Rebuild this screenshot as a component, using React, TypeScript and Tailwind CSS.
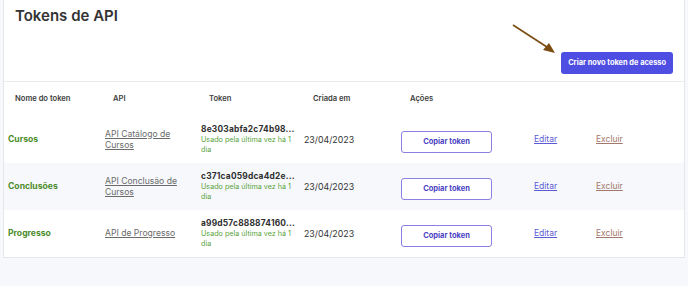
import React from 'react'

type TokenRow = {
  name: string
  api: string
  token: string
  created: string
}

const rows: TokenRow[] = [
  { name: 'Cursos', api: 'API Catálogo de Cursos', token: '8e303abfa2c74b98...', created: '23/04/2023' },
  { name: 'Conclusões', api: 'API Conclusão de Cursos', token: 'c371ca059dca4d2e...', created: '23/04/2023' },
  { name: 'Progresso', api: 'API de Progresso', token: 'a99d57c888874160...', created: '23/04/2023' },
]

function Arrow() {
  return (
    <svg className="pointer-events-none absolute left-[510px] top-[22px]" width="50" height="36" viewBox="0 0 50 36" aria-hidden="true">
      <line x1="3" y1="3" x2="40" y2="27" stroke="#7a4c12" strokeWidth="1.6" />
      <polygon points="45,31 33,28 39,21" fill="#7a4c12" />
    </svg>
  )
}

export default function App() {
  return (
    <div className="relative h-[286px] w-[688px] overflow-hidden bg-[#f7f8fb] font-['Inter','Noto_Sans',sans-serif]">
      <div className="mx-[3px] -mt-px border border-[#e6e7eb] bg-white">
        {/* cabeçalho do card */}
        <div className="flex h-[82px] flex-col justify-between border-b border-[#e9eaee] px-[11px] pb-[7px] pt-[7px]">
          <h1 className="text-[15px] font-semibold leading-[18px] text-[#333333]">Tokens de API</h1>
          <div className="flex justify-end">
            <button type="button" className="h-[22px] rounded-[3px] bg-[#4f4ee3] px-[7px] text-[7.4px] font-bold text-white">
              Criar novo token de acesso
            </button>
          </div>
        </div>

        {/* cabeçalho da tabela */}
        <div className="grid h-[34px] grid-cols-[98px_96px_104px_97px_1fr] items-center pl-[11px] text-[7.6px] font-semibold text-[#3d3d3d]">
          <span>Nome do token</span>
          <span>API</span>
          <span>Token</span>
          <span>Criada em</span>
          <span>Ações</span>
        </div>

        {rows.map((row, i) => (
          <div
            key={row.name}
            className={`grid h-[47px] grid-cols-[97px_96px_103px_97px_133px_62px_1fr] items-center pl-[4px] ${i === 1 ? 'bg-[#f6f8fb]' : 'bg-white'}`}
          >
            <span className="text-[8.6px] font-bold text-[#4a8c2a]">{row.name}</span>
            <a href="#" className="w-[72px] text-[8.6px] leading-[11px] text-[#6b6b6b] underline">
              {row.api}
            </a>
            <div className="w-[94px]">
              <div className="text-[8.4px] font-bold leading-[11px] tracking-[0.2px] text-[#2f2f2f]">{row.token}</div>
              <div className="text-[7.2px] leading-[10px] text-[#5aa33c]">Usado pela última vez há 1 dia</div>
            </div>
            <span className="text-[8.8px] text-[#333333]">{row.created}</span>
            <div>
              <button type="button" className="h-[22px] w-[91px] rounded-[3px] border border-[#8a80e2] bg-white text-[7.5px] font-bold text-[#4a3fc2]">
                Copiar token
              </button>
            </div>
            <a href="#" className="text-[8.5px] text-[#5b5bd6] underline">
              Editar
            </a>
            <a href="#" className="text-[8.5px] text-[#a3786c] underline">
              Excluir
            </a>
          </div>
        ))}
      </div>
      <Arrow />
    </div>
  )
}
